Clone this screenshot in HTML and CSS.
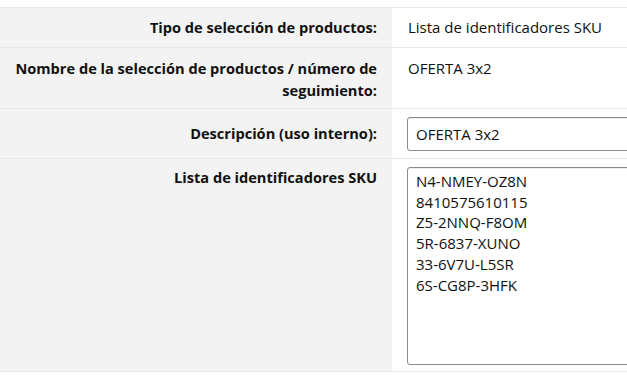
FILE: index.html
```html
<!DOCTYPE html>
<html lang="es">
<head>
<meta charset="utf-8">
<title>Selección de productos</title>
<link rel="stylesheet" href="styles.css">
</head>
<body>
<div class="form">
  <div class="row row-type">
    <div class="label">Tipo de selección de productos:</div>
    <div class="value">Lista de identificadores SKU</div>
  </div>
  <div class="row row-name">
    <div class="label">Nombre de la selección de productos / número de seguimiento:</div>
    <div class="value">OFERTA 3x2</div>
  </div>
  <div class="row row-desc">
    <div class="label">Descripción (uso interno):</div>
    <div class="value"><input class="text-input" type="text" value="OFERTA 3x2"></div>
  </div>
  <div class="row row-sku">
    <div class="label">Lista de identificadores SKU</div>
    <div class="value"><textarea class="text-area">N4-NMEY-OZ8N
8410575610115
Z5-2NNQ-F8OM
5R-6837-XUNO
33-6V7U-L5SR
6S-CG8P-3HFK</textarea></div>
  </div>
</div>
</body>
</html>
```

FILE: styles.css
```css
html, body {
  margin: 0;
  padding: 0;
  overflow: hidden;
  background: #ffffff;
}
body {
  font-family: "Open Sans", "Noto Sans", sans-serif;
  font-size: 15px;
  line-height: 22px;
  color: #0f1111;
}
.form {
  margin-top: 7px;
  border-top: 1px solid #e7e7e7;
}
.row {
  display: grid;
  grid-template-columns: 392px 1fr;
  border-bottom: 1px solid #e7e7e7;
}
.label {
  background: #f3f3f3;
  font-size: 14.6px;
  font-weight: 700;
  color: #111111;
  text-align: right;
  padding: 0 15px 0 12px;
}
.value {
  padding: 0 0 0 16px;
  white-space: nowrap;
  overflow: hidden;
}
.row-type .label, .row-type .value { padding-top: 8px; padding-bottom: 9px; }
.row-name .label, .row-name .value { padding-top: 9px; padding-bottom: 7px; }
.row-desc .label { padding-top: 13px; }
.row-desc .value { padding-top: 8px; padding-bottom: 7px; padding-left: 15px; }
.row-sku .label { padding-top: 7px; }
.row-sku .value { padding-top: 8px; padding-bottom: 6px; padding-left: 15px; }
.text-input, .text-area {
  display: block;
  box-sizing: border-box;
  width: 300px;
  font: inherit;
  color: #0f1111;
  border: 1px solid #888c8c;
  border-radius: 3px;
  box-shadow: 0 1px 0 rgba(255,255,255,.5), 0 1px 0 rgba(0,0,0,.07) inset;
  background: #fff;
  margin: 0;
  outline: none;
}
.text-input {
  height: 34px;
  padding: 0 8px;
}
.text-area {
  height: 198px;
  padding: 3px 8px;
  line-height: 20.7px;
  resize: none;
  overflow: hidden;
}
```
